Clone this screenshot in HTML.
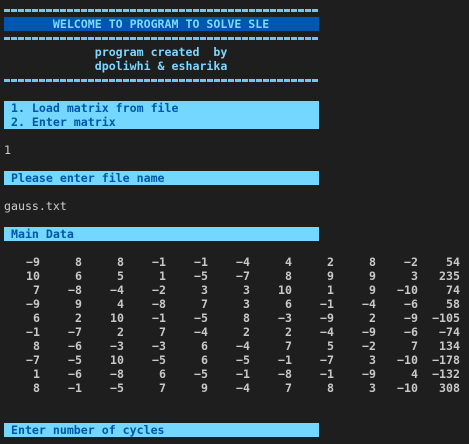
<!DOCTYPE html>
<html><head><style>
html,body{margin:0;padding:0;background:#1e1e1e;width:469px;height:444px;overflow:hidden}
body{position:relative;font-family:"DejaVu Sans Mono","Liberation Mono",monospace;font-size:11.6px;color:#cccccc}
.l{position:absolute;left:4px;height:14px;line-height:14px;white-space:pre}
.dash{position:absolute;left:4px;width:315px;height:3px;background:repeating-linear-gradient(90deg,#6fc8ec 0 6px,transparent 6px 7px)}
.ban{width:315px;background:#0057b0;color:#7fd6ff;font-weight:bold}
.bar{width:315px;background:#74d7ff;color:#0057a8;font-weight:bold}
.c{color:#7fd6ff;font-weight:bold}
.row{position:absolute;left:-2px;height:14px;line-height:14px;display:flex;font-weight:bold;color:#c8c8c8}
.row span{width:42px;text-align:right}
</style></head><body>
<div class="dash" style="top:9px"></div>
<div class="l ban" style="top:17px">       WELCOME TO PROGRAM TO SOLVE SLE</div>
<div class="dash" style="top:37px"></div>
<div class="l c" style="top:45px">             program created  by</div>
<div class="l c" style="top:59px">             dpoliwhi &amp; esharika</div>
<div class="dash" style="top:79px"></div>
<div class="l bar" style="top:101px"> 1. Load matrix from file</div>
<div class="l bar" style="top:115px"> 2. Enter matrix</div>
<div class="l" style="top:143px">1</div>
<div class="l bar" style="top:171px"> Please enter file name</div>
<div class="l" style="top:199px">gauss.txt</div>
<div class="l bar" style="top:227px"> Main Data</div>
<div class="row" style="top:255px"><span>−9</span><span>8</span><span>8</span><span>−1</span><span>−1</span><span>−4</span><span>4</span><span>2</span><span>8</span><span>−2</span><span>54</span></div>
<div class="row" style="top:269px"><span>10</span><span>6</span><span>5</span><span>1</span><span>−5</span><span>−7</span><span>8</span><span>9</span><span>9</span><span>3</span><span>235</span></div>
<div class="row" style="top:283px"><span>7</span><span>−8</span><span>−4</span><span>−2</span><span>3</span><span>3</span><span>10</span><span>1</span><span>9</span><span>−10</span><span>74</span></div>
<div class="row" style="top:297px"><span>−9</span><span>9</span><span>4</span><span>−8</span><span>7</span><span>3</span><span>6</span><span>−1</span><span>−4</span><span>−6</span><span>58</span></div>
<div class="row" style="top:311px"><span>6</span><span>2</span><span>10</span><span>−1</span><span>−5</span><span>8</span><span>−3</span><span>−9</span><span>2</span><span>−9</span><span>−105</span></div>
<div class="row" style="top:325px"><span>−1</span><span>−7</span><span>2</span><span>7</span><span>−4</span><span>2</span><span>2</span><span>−4</span><span>−9</span><span>−6</span><span>−74</span></div>
<div class="row" style="top:339px"><span>8</span><span>−6</span><span>−3</span><span>−3</span><span>6</span><span>−4</span><span>7</span><span>5</span><span>−2</span><span>7</span><span>134</span></div>
<div class="row" style="top:353px"><span>−7</span><span>−5</span><span>10</span><span>−5</span><span>6</span><span>−5</span><span>−1</span><span>−7</span><span>3</span><span>−10</span><span>−178</span></div>
<div class="row" style="top:367px"><span>1</span><span>−6</span><span>−8</span><span>6</span><span>−5</span><span>−1</span><span>−8</span><span>−1</span><span>−9</span><span>4</span><span>−132</span></div>
<div class="row" style="top:381px"><span>8</span><span>−1</span><span>−5</span><span>7</span><span>9</span><span>−4</span><span>7</span><span>8</span><span>3</span><span>−10</span><span>308</span></div>
<div class="l bar" style="top:423px"> Enter number of cycles</div>
</body></html>
